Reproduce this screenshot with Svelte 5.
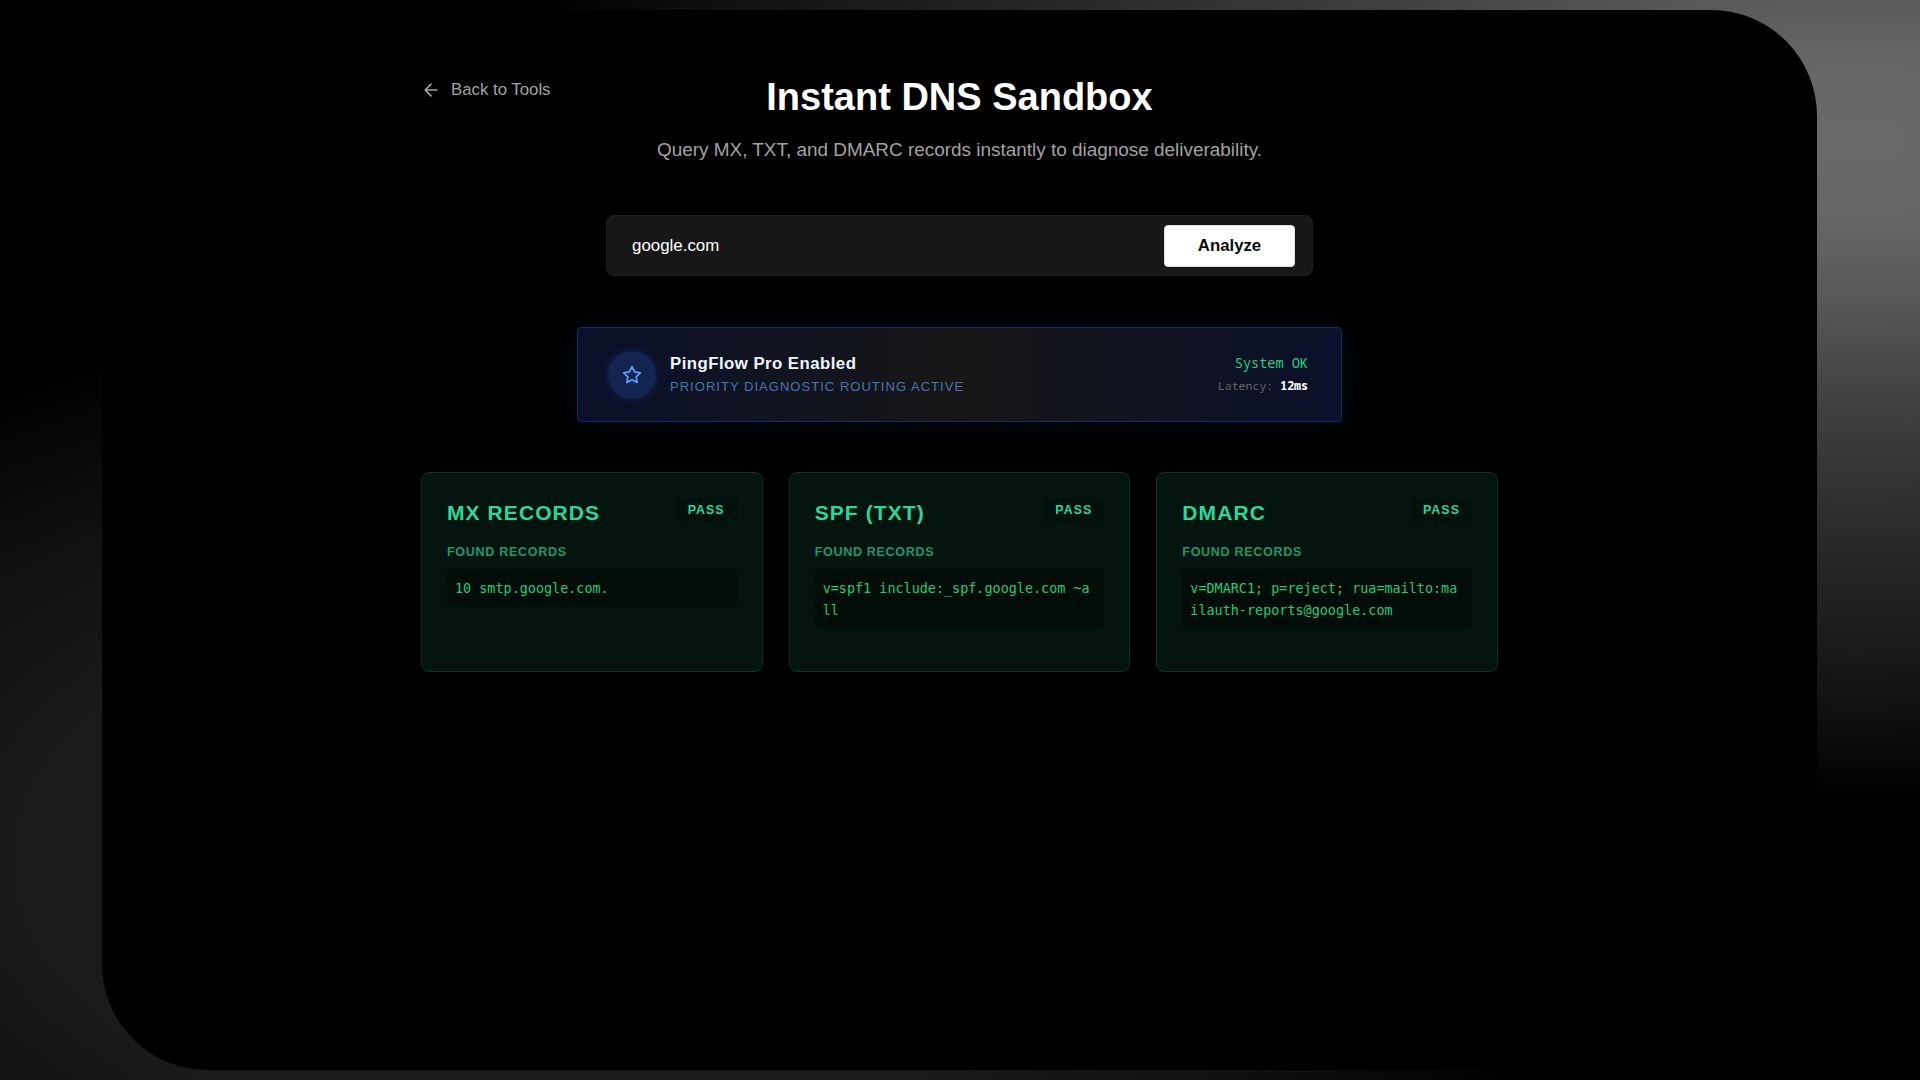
<script lang="ts">
    type DnsRecord = { name: string; status: string; value: string };

    let domain = $state('google.com');

    const records: DnsRecord[] = [
        { name: 'MX Records', status: 'PASS', value: '10 smtp.google.com.' },
        { name: 'SPF (TXT)', status: 'PASS', value: 'v=spf1 include:_spf.google.com ~all' },
        { name: 'DMARC', status: 'PASS', value: 'v=DMARC1; p=reject; rua=mailto:mailauth-reports@google.com' }
    ];
</script>

<div class="page">
    <main class="panel">
        <div class="wrap">
            <header class="head">
                <a class="back" href="#tools">
                    <svg viewBox="0 0 24 24" width="20" height="20" aria-hidden="true">
                        <path d="M19 12H5m7 7-7-7 7-7" />
                    </svg>
                    Back to Tools
                </a>
                <div class="intro">
                    <h1>Instant DNS Sandbox</h1>
                    <p>Query MX, TXT, and DMARC records instantly to diagnose deliverability.</p>
                </div>
            </header>

            <form class="search" onsubmit={(e) => e.preventDefault()}>
                <input bind:value={domain} aria-label="Domain" />
                <button type="submit">Analyze</button>
            </form>

            <section class="pro">
                <div class="badge">
                    <svg viewBox="0 0 24 24" width="20" height="20" aria-hidden="true">
                        <path d="M12 2l3.09 6.26L22 9.27l-5 4.87 1.18 6.88L12 17.77l-6.18 3.25L7 14.14 2 9.27l6.91-1.01L12 2z" />
                    </svg>
                </div>
                <div class="pro-text">
                    <strong>PingFlow Pro Enabled</strong>
                    <span>Priority Diagnostic Routing Active</span>
                </div>
                <div class="system">
                    <div class="ok">System OK</div>
                    <div class="latency">Latency: <b>12ms</b></div>
                </div>
            </section>

            <section class="cards">
                {#each records as r}
                    <article class="card">
                        <div class="card-head">
                            <h2>{r.name}</h2>
                            <span class="pass">{r.status}</span>
                        </div>
                        <div class="label">Found Records</div>
                        <code>{r.value}</code>
                    </article>
                {/each}
            </section>
        </div>
    </main>
</div>

<style>
    :global(body) { background: #000; }

    /* soft lights behind the panel, top right and bottom left */
    .page {
        box-sizing: border-box;
        height: 100vh;
        padding: 10px 103px 10px 102px;
        overflow: hidden;
        font-family: "Liberation Sans", Arial, sans-serif;
        color: #fff;
        background:
            radial-gradient(ellipse 1350px 660px at 1860px 140px, #6a6a6a 0%, #666 12%, #585858 24%, #404040 40%, #2a2a2a 60%, #141414 83%, transparent 100%),
            radial-gradient(ellipse 1050px 560px at 560px 860px, #1b1b1b 0%, #1a1a1a 50%, #111 72%, transparent 100%),
            #000;
    }
    .panel {
        height: 100%;
        background: #000;
        border-radius: 106px;
        overflow: hidden;
    }
    .wrap { width: 1077px; margin: 0 auto; padding-top: 64px; }

    .head {
        display: grid;
        grid-template-columns: 1fr auto 1fr;
        align-items: start;
    }
    .back {
        display: flex;
        align-items: center;
        gap: 10px;
        height: 31px;
        color: #a3a3a3;
        font-size: 16.8px;
        text-decoration: none;
    }
    .back svg { fill: none; stroke: currentColor; stroke-width: 2; stroke-linecap: round; stroke-linejoin: round; }
    .intro { text-align: center; }
    h1 { margin: 0; font-size: 38px; line-height: 47px; font-weight: 700; }
    .intro p { margin: 16px 0 0; color: #a3a3a3; font-size: 18.93px; line-height: 26px; }

    .search {
        box-sizing: border-box;
        width: 707px;
        height: 61px;
        margin: 52px auto 0;
        padding: 9px 17px 8px 25px;
        display: flex;
        align-items: center;
        background: #171717;
        border: 1px solid #202020;
        border-radius: 8px;
    }
    .search input {
        flex: 1;
        padding: 0;
        border: 0;
        outline: 0;
        background: none;
        color: #fff;
        font: 16.9px "Liberation Sans", Arial, sans-serif;
    }
    .search button {
        width: 131px;
        height: 42px;
        padding: 0;
        border: 1px solid #ddd;
        border-radius: 4px;
        background: #fff;
        color: #0a0a0a;
        font: 700 16.8px "Liberation Sans", Arial, sans-serif;
    }

    .pro {
        box-sizing: border-box;
        width: 765px;
        height: 95px;
        margin: 51px auto 0;
        padding: 0 33px 0 30px;
        display: flex;
        align-items: center;
        border: 1px solid #122b60;
        border-radius: 4px;
        background: linear-gradient(90deg, #0a102a, #171717 50%, #0a102a);
        box-shadow: 0 0 30px rgba(59, 130, 246, .09);
    }
    .badge {
        width: 48px;
        height: 48px;
        border-radius: 50%;
        display: grid;
        place-items: center;
        background: #132450;
        box-shadow: 0 0 10px rgba(37, 99, 235, .2);
    }
    .badge svg { fill: none; stroke: #60a5fa; stroke-width: 2; stroke-linejoin: round; }
    .pro-text { margin-left: 14px; flex: 1; }
    .pro-text strong { display: block; font-size: 16.8px; line-height: 24px; color: #eff6ff; letter-spacing: .46px; }
    .pro-text span {
        display: block;
        color: #4a75ae;
        font-size: 13px;
        line-height: 21px;
        letter-spacing: 1.03px;
        text-transform: uppercase;
    }
    .system { margin-bottom: 1px; text-align: right; font-family: "Noto Sans Mono", "DejaVu Sans Mono", monospace; }
    .ok { color: #22d384; font-size: 13.56px; line-height: 23px; }
    .latency { color: #666; font-size: 11.57px; line-height: 21px; }
    .latency b { color: #fff; }

    .cards {
        display: grid;
        grid-template-columns: repeat(3, 1fr);
        gap: 26px;
        margin-top: 49.5px;
    }
    .card {
        box-sizing: border-box;
        height: 200px;
        padding: 25px;
        border: 1px solid #0b3325;
        border-radius: 8px;
        background: #04140f;
    }
    .card-head { display: flex; justify-content: space-between; align-items: flex-start; }
    h2 {
        margin: 0;
        color: #30d59a;
        font-size: 21px;
        line-height: 30px;
        letter-spacing: 1.08px;
        text-transform: uppercase;
    }
    .pass {
        padding: 0 12px;
        border-radius: 4px;
        background: #03110d;
        color: #30d59a;
        font-size: 12.4px;
        font-weight: 700;
        line-height: 24px;
        letter-spacing: 1.05px;
    }
    .label {
        margin-top: 14px;
        color: #23946e;
        font-size: 12.6px;
        font-weight: 700;
        line-height: 20px;
        letter-spacing: .65px;
        text-transform: uppercase;
    }
    code {
        display: block;
        margin-top: 7px;
        padding: 9.5px 8px 7px;
        border-radius: 4px;
        background: #020d09;
        color: #25c97e;
        font: 13.45px/21.5px "DejaVu Sans Mono", monospace;
        word-break: break-all;
    }
</style>
